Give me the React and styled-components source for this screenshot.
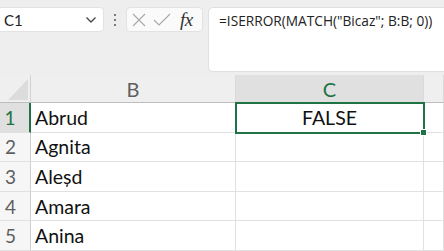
import React from "react";
import styled, { createGlobalStyle } from "styled-components";

const GlobalStyle = createGlobalStyle`
  html, body {
    margin: 0;
    padding: 0;
    background: #eeeeee;
    overflow: hidden;
  }
`;

const Page = styled.div`
  width: 444px;
  height: 251px;
  overflow: hidden;
  display: flex;
  flex-direction: column;
`;

const Toolbar = styled.div`
  height: 80px;
  display: flex;
  align-items: flex-start;
  padding-top: 7px;
  box-sizing: border-box;
  margin-left: -6px;
  & > * {
    flex-shrink: 0;
  }
`;

const NameBox = styled.div`
  width: 110px;
  height: 25px;
  box-sizing: border-box;
  background: #fff;
  border: 1px solid #e2e2e2;
  border-radius: 4px;
  display: flex;
  align-items: center;
  justify-content: space-between;
  padding: 0 6px 0 9px;
  font-family: Lato, sans-serif;
  font-size: 15px;
  color: #222;
`;

const Grip = styled.div`
  width: 22px;
  height: 25px;
  display: flex;
  flex-direction: column;
  align-items: center;
  justify-content: center;
  gap: 3px;
  span {
    width: 2px;
    height: 2px;
    background: #555;
    border-radius: 1px;
  }
`;

const FuncButtons = styled.div`
  width: 77px;
  height: 25px;
  box-sizing: border-box;
  background: #fafafa;
  border: 1px solid #e2e2e2;
  border-radius: 4px;
  display: flex;
  align-items: center;
  padding: 0 4px;
  gap: 6px;
`;

const Fx = styled.span`
  font-family: "Liberation Serif", serif;
  font-style: italic;
  font-size: 19px;
  color: #333;
  margin-left: 3px;
  letter-spacing: -0.5px;
`;

const FormulaBar = styled.div`
  margin-left: 5px;
  width: 300px;
  height: 65px;
  box-sizing: border-box;
  background: #fff;
  border: 1px solid #e0e0e0;
  border-radius: 5px;
  padding: 3px 10px;
  font-family: "Open Sans", sans-serif;
  font-size: 13.7px;
  color: #222;
  white-space: nowrap;
`;

const Sheet = styled.div`
  display: grid;
  grid-template-columns: 31px 205px 188px 1fr;
  grid-template-rows: 28px repeat(5, 29.6px);
  font-family: Lato, sans-serif;
`;

const Corner = styled.div`
  background: #efefef;
  border-right: 1px solid #d2d2d2;
  border-bottom: 1px solid #bdbdbd;
  display: flex;
  align-items: flex-end;
  justify-content: flex-end;
  padding: 0 2px 2px 0;
`;

const ColHeader = styled.div`
  background: ${(p) => (p.$selected ? "#e0e0e0" : "#efefef")};
  color: ${(p) => (p.$selected ? "#217346" : "#5f5f5f")};
  border-right: 1px solid #dadada;
  border-bottom: 1px solid #bdbdbd;
  display: flex;
  align-items: center;
  justify-content: center;
  font-size: 20px;
  padding-top: 1px;
`;

const RowHeader = styled.div`
  background: ${(p) => (p.$selected ? "#e0e0e0" : "#f6f6f6")};
  color: ${(p) => (p.$selected ? "#217346" : "#5f5f5f")};
  border-right: ${(p) => (p.$selected ? "2px solid #217346" : "1px solid #cfcfcf")};
  border-bottom: 1px solid #e1e1e1;
  display: flex;
  align-items: center;
  justify-content: center;
  padding-right: 9px;
  font-size: 19px;
`;

const Cell = styled.div`
  position: relative;
  background: #fff;
  border-right: 1px solid #e1e1e1;
  border-bottom: 1px solid #e1e1e1;
  display: flex;
  align-items: center;
  justify-content: ${(p) => (p.$center ? "center" : "flex-start")};
  padding-left: ${(p) => (p.$center ? "0" : "4px")};
  font-size: 19.5px;
  color: #111;
  ${(p) =>
    p.$selected &&
    `
    outline: 2px solid #217346;
    outline-offset: -1px;
    z-index: 1;
    &::after {
      content: "";
      position: absolute;
      right: -4px;
      bottom: -4px;
      width: 5px;
      height: 5px;
      background: #217346;
      border: 1px solid #fff;
    }
  `}
`;

const Chevron = () => (
  <svg width="12" height="8" viewBox="0 0 12 8">
    <path d="M1.5 1.5 L6 6 L10.5 1.5" fill="none" stroke="#444" strokeWidth="1.3" />
  </svg>
);

const CancelIcon = () => (
  <svg width="16" height="16" viewBox="0 0 16 16">
    <path d="M2 2 L14 14 M14 2 L2 14" stroke="#a8a8a8" strokeWidth="1.1" fill="none" />
  </svg>
);

const CheckIcon = () => (
  <svg width="18" height="16" viewBox="0 0 18 16">
    <path d="M1 8 L6 13 L17 2" stroke="#a8a8a8" strokeWidth="1.1" fill="none" />
  </svg>
);

const names = ["Abrud", "Agnita", "Aleșd", "Amara", "Anina"];

export default function App() {
  return (
    <Page>
      <GlobalStyle />
      <Toolbar>
        <NameBox>
          C1
          <Chevron />
        </NameBox>
        <Grip>
          <span />
          <span />
          <span />
        </Grip>
        <FuncButtons>
          <CancelIcon />
          <CheckIcon />
          <Fx>fx</Fx>
        </FuncButtons>
        <FormulaBar>=ISERROR(MATCH("Bicaz"; B:B; 0))</FormulaBar>
      </Toolbar>
      <Sheet>
        <Corner>
          <svg width="20" height="21" viewBox="0 0 20 21">
            <polygon points="20,0 20,21 0,21" fill="#dcdcdc" />
          </svg>
        </Corner>
        <ColHeader>B</ColHeader>
        <ColHeader $selected>C</ColHeader>
        <ColHeader />
        {names.map((name, i) => (
          <React.Fragment key={name}>
            <RowHeader $selected={i === 0}>{i + 1}</RowHeader>
            <Cell>{name}</Cell>
            <Cell $center $selected={i === 0}>
              {i === 0 ? "FALSE" : ""}
            </Cell>
            <Cell />
          </React.Fragment>
        ))}
      </Sheet>
    </Page>
  );
}
